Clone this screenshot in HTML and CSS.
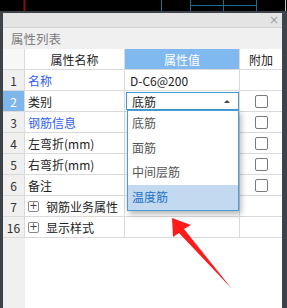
FILE: index.html
```html
<!DOCTYPE html>
<html lang="zh">
<head>
<meta charset="UTF-8">
<title>属性列表</title>
<link rel="stylesheet" href="styles.css">
</head>
<body>
<div class="canvas">
  <svg width="287" height="11" viewBox="0 0 287 11">
    <line x1="24.5" y1="0" x2="24.5" y2="11" stroke="#8a0c0c" stroke-width="2"/>
    <line x1="161.5" y1="0" x2="161.5" y2="11" stroke="#0d7f86" stroke-width="1"/>
    <line x1="190.5" y1="0" x2="190.5" y2="11" stroke="#136f8c" stroke-width="1"/>
    <line x1="223.5" y1="0" x2="223.5" y2="11" stroke="#136f8c" stroke-width="1"/>
    <line x1="256.5" y1="0" x2="256.5" y2="11" stroke="#136f8c" stroke-width="1"/>
    <line x1="190" y1="5.5" x2="257" y2="5.5" stroke="#136f8c" stroke-width="1"/>
    <line x1="285.5" y1="0" x2="285.5" y2="11" stroke="#bfc3c7" stroke-width="1"/>
  </svg>
</div>

<div class="frame">
  <div class="panel">
    <div class="titlebar"><span class="close">×</span></div>
    <div class="caption">属性列表</div>

    <div class="sheet">
      <div class="grid">
        <div class="cell idx head-idx"></div>
        <div class="cell head">属性名称</div>
        <div class="cell head active">属性值</div>
        <div class="cell head">附加</div>

        <div class="cell idx">1</div>
        <div class="cell name link">名称</div>
        <div class="cell value">D-C6@200</div>
        <div class="cell add"></div>

        <div class="cell idx selected">2</div>
        <div class="cell name">类别</div>
        <div class="cell value edit">
          <div class="select">
            <span>底筋</span>
            <span class="caret"></span>
            <ul class="dropdown">
              <li>底筋</li>
              <li>面筋</li>
              <li>中间层筋</li>
              <li class="hover">温度筋</li>
            </ul>
          </div>
        </div>
        <div class="cell add"><span class="check"></span></div>

        <div class="cell idx">3</div>
        <div class="cell name link">钢筋信息</div>
        <div class="cell value"></div>
        <div class="cell add"><span class="check"></span></div>

        <div class="cell idx">4</div>
        <div class="cell name">左弯折(mm)</div>
        <div class="cell value"></div>
        <div class="cell add"><span class="check"></span></div>

        <div class="cell idx">5</div>
        <div class="cell name">右弯折(mm)</div>
        <div class="cell value"></div>
        <div class="cell add"><span class="check"></span></div>

        <div class="cell idx">6</div>
        <div class="cell name">备注</div>
        <div class="cell value"></div>
        <div class="cell add"><span class="check"></span></div>

        <div class="cell idx">7</div>
        <div class="cell name"><span class="expand">+</span>钢筋业务属性</div>
        <div class="cell value"></div>
        <div class="cell add"></div>

        <div class="cell idx">16</div>
        <div class="cell name"><span class="expand">+</span>显示样式</div>
        <div class="cell value"></div>
        <div class="cell add"></div>
      </div>
    </div>
  </div>
</div>

<svg class="pointer" width="287" height="308" viewBox="0 0 287 308">
  <polygon points="172,218 191,225 184,229 232,289 179,233 173,237" fill="#ff1b1b"/>
</svg>
</body>
</html>
```

FILE: styles.css
```css
html, body {
  margin: 0;
  padding: 0;
}
body {
  width: 287px;
  height: 308px;
  overflow: hidden;
  background: #000;
  position: relative;
  font-family: "Noto Sans CJK SC", "Noto Sans", sans-serif;
  font-size: 12px;
  color: #222;
}
.canvas {
  height: 11px;
  line-height: 0;
}
.frame {
  height: 297px;
  box-sizing: border-box;
  background: #3e4349;
  padding: 2px 5px 0 3px;
  display: flex;
}
.panel {
  flex: 1;
  display: flex;
  flex-direction: column;
  background: #fff;
}
.titlebar {
  height: 14px;
  background: #e4e4e4;
  border-bottom: 1px solid #d2d2d2;
  display: flex;
  justify-content: flex-end;
  align-items: center;
  padding-right: 3px;
}
.close {
  color: #a0a0a0;
  font-family: "DejaVu Sans", sans-serif;
  font-size: 12px;
  line-height: 14px;
}
.caption {
  height: 21px;
  line-height: 21px;
  background: #f0f0f0;
  color: #7d7d7d;
  padding-left: 8px;
  font-size: 12.5px;
}
.sheet {
  flex: 1;
  background: linear-gradient(to right, #f0f0f0 22px, #fff 22px);
}
.grid {
  display: grid;
  grid-template-columns: 22px 100px 115px 42px;
  grid-auto-rows: 21px;
  background: #fff;
}
.cell {
  box-sizing: border-box;
  border-right: 1px solid #dadada;
  border-bottom: 1px solid #dadada;
  display: flex;
  align-items: center;
  white-space: nowrap;
}
.cell:nth-child(4n) {
  border-right: none;
}
.idx {
  background: #f0f0f0;
  justify-content: center;
  color: #333;
}
.head-idx {
  background: #f7f7f7;
}
.idx.selected {
  background: #7fb6ec;
  color: #fff;
}
.head {
  justify-content: center;
  color: #222;
}
.head.active {
  background: #80b8f0;
  color: #fff;
}
.name {
  padding-left: 3px;
}
.link {
  color: #2f5df0;
}
.value {
  padding-left: 5px;
}
.value.edit {
  padding: 0;
  align-items: flex-start;
  overflow: visible;
}
.select {
  position: relative;
  box-sizing: border-box;
  margin: 1px 0 0 1px;
  width: 113px;
  height: 18px;
  border: 1px solid #3f9bd8;
  background: #fff;
  display: flex;
  align-items: center;
  justify-content: space-between;
  padding: 0 8px 0 5px;
  z-index: 2;
}
.caret {
  width: 0;
  height: 0;
  border-left: 3px solid transparent;
  border-right: 3px solid transparent;
  border-bottom: 3px solid #444;
}
.dropdown {
  position: absolute;
  top: 17px;
  left: 0;
  width: 112px;
  box-sizing: border-box;
  margin: 0;
  padding: 0;
  list-style: none;
  background: #fff;
  border: 1px solid #4a9cd2;
  box-shadow: 2px 3px 6px rgba(0, 0, 0, 0.3);
}
.dropdown li {
  height: 24.7px;
  line-height: 24.7px;
  padding-left: 4px;
  color: #555;
}
.dropdown li.hover {
  background: #c2d9f0;
  color: #2371c3;
}
.add {
  justify-content: center;
}
.check {
  width: 13px;
  height: 13px;
  box-sizing: border-box;
  border: 1px solid #7a7a7a;
  border-radius: 2px;
  background: #fff;
  margin-left: 1px;
}
.expand {
  width: 11px;
  height: 11px;
  box-sizing: border-box;
  border: 1px solid #888;
  border-radius: 2px;
  display: inline-flex;
  align-items: center;
  justify-content: center;
  font-family: "DejaVu Sans", sans-serif;
  font-size: 10px;
  line-height: 1;
  color: #444;
  margin: 0 7px 0 0;
}
.pointer {
  position: absolute;
  left: 0;
  top: 0;
  pointer-events: none;
}
```
